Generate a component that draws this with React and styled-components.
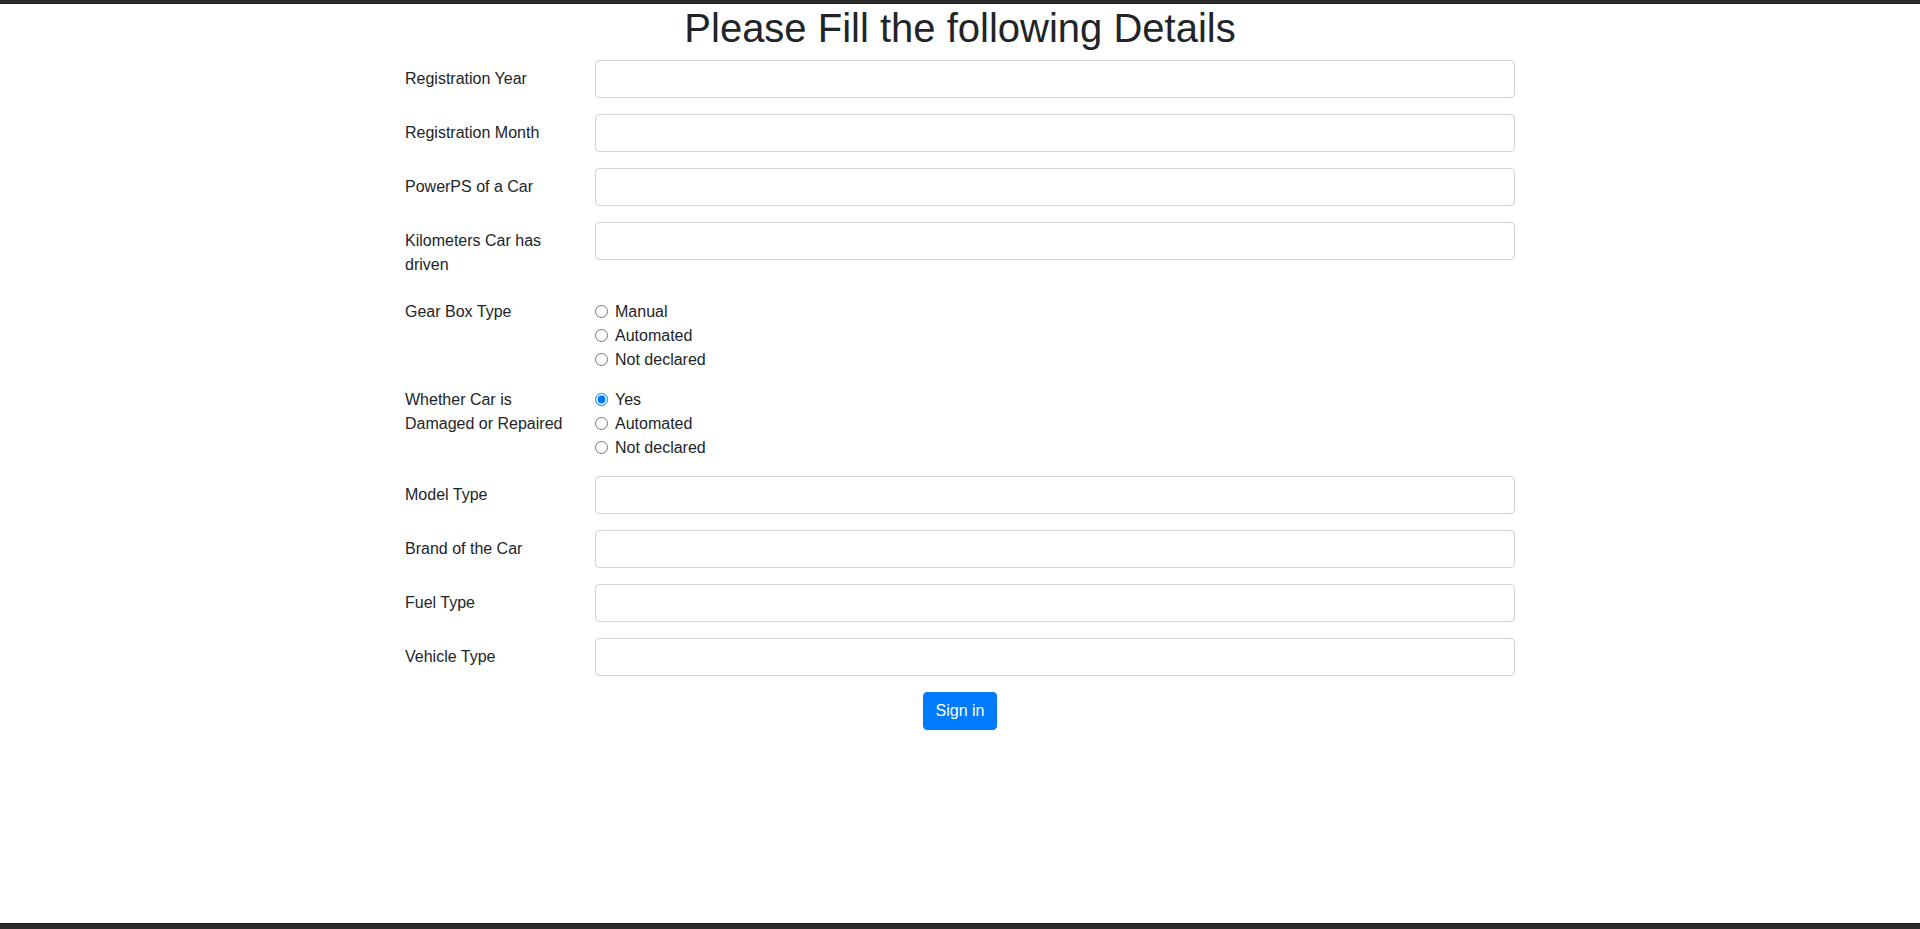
import React, { useState } from "react";
import styled, { createGlobalStyle } from "styled-components";

const GlobalStyle = createGlobalStyle`
	*, *::before, *::after {
		box-sizing: border-box;
	}
	body {
		margin: 0;
		font-family: "Liberation Sans", Arial, sans-serif;
		font-size: 16px;
		line-height: 1.5;
		color: #212529;
		background: #fff;
	}
`;

function App() {
	const textFields = [
		"Registration Year",
		"Registration Month",
		"PowerPS of a Car",
		"Kilometers Car has driven",
	];
	const moreFields = ["Model Type", "Brand of the Car", "Fuel Type", "Vehicle Type"];

	const [gear, setGear] = useState("");
	const [damaged, setDamaged] = useState("yes");

	return (
		<Page>
			<GlobalStyle />
			<Edge $height={4} />
			<Main>
				<Container>
					<Title>Please Fill the following Details</Title>
					<form onSubmit={(e) => e.preventDefault()}>
						{textFields.map((name) => (
							<FormRow key={name}>
								<Label>{name}</Label>
								<Field>
									<Input type="text" />
								</Field>
							</FormRow>
						))}

						<FormRow as="fieldset">
							<Label as="legend" $flat>
								Gear Box Type
							</Label>
							<Field>
								{[
									["manual", "Manual"],
									["automated", "Automated"],
									["none", "Not declared"],
								].map(([value, text]) => (
									<Check key={value}>
										<input
											type="radio"
											name="gear"
											checked={gear === value}
											onChange={() => setGear(value)}
										/>
										<span>{text}</span>
									</Check>
								))}
							</Field>
						</FormRow>

						<FormRow as="fieldset">
							<Label as="legend" $flat>
								Whether Car is Damaged or Repaired
							</Label>
							<Field>
								{[
									["yes", "Yes"],
									["automated", "Automated"],
									["none", "Not declared"],
								].map(([value, text]) => (
									<Check key={value}>
										<input
											type="radio"
											name="damaged"
											checked={damaged === value}
											onChange={() => setDamaged(value)}
										/>
										<span>{text}</span>
									</Check>
								))}
							</Field>
						</FormRow>

						{moreFields.map((name) => (
							<FormRow key={name}>
								<Label>{name}</Label>
								<Field>
									<Input type="text" />
								</Field>
							</FormRow>
						))}

						<Actions>
							<Button type="submit">Sign in</Button>
						</Actions>
					</form>
				</Container>
			</Main>
			<Edge $height={6} $bottom />
		</Page>
	);
}

const Page = styled.div`
	display: flex;
	flex-direction: column;
	min-height: 100vh;
`;

const Edge = styled.div`
	height: ${(p) => p.$height}px;
	flex-shrink: 0;
	background: #2c2c2c;
	${(p) =>
		p.$bottom
			? "border-top: 1px solid #1b1b1b;"
			: "border-bottom: 1px solid #1b1b1b;"}
`;

const Main = styled.main`
	flex: 1;
`;

const Container = styled.div`
	max-width: 1140px;
	margin: 0 auto;
	padding: 0 15px;
`;

const Title = styled.h1`
	margin: 0 0 8px;
	font-size: 40px;
	font-weight: 500;
	line-height: 1.2;
	text-align: center;
	color: #212529;
`;

const FormRow = styled.div`
	display: flex;
	margin: 0 -15px 16px;
	padding: 0;
	border: 0;
	min-width: 0;
`;

const Label = styled.label`
	flex: 0 0 16.6667%;
	max-width: 16.6667%;
	padding: ${(p) => (p.$flat ? "0 15px" : "7px 15px")};
	margin: 0;
	float: left;
	font-size: 16px;
	line-height: 1.5;
	color: #212529;
`;

const Field = styled.div`
	flex: 0 0 83.3333%;
	max-width: 83.3333%;
	padding: 0 15px;
`;

const Input = styled.input`
	display: block;
	width: 100%;
	height: 38px;
	padding: 6px 12px;
	font-family: inherit;
	font-size: 16px;
	line-height: 1.5;
	color: #495057;
	background: #fff;
	border: 1px solid #ced4da;
	border-radius: 4px;

	&:focus {
		outline: none;
		border-color: #80bdff;
		box-shadow: 0 0 0 3px rgba(0, 123, 255, 0.25);
	}
`;

const Check = styled.label`
	display: flex;
	align-items: flex-start;
	line-height: 24px;

	input {
		width: 13px;
		height: 13px;
		margin: 5px 7px 0 0;
		flex-shrink: 0;
	}
`;

const Actions = styled.div`
	display: flex;
	justify-content: center;
`;

const Button = styled.button`
	padding: 6px 12px;
	font-family: inherit;
	font-size: 16px;
	line-height: 1.5;
	color: #fff;
	background: #007bff;
	border: 1px solid #007bff;
	border-radius: 4px;
	cursor: pointer;

	&:hover {
		background: #0069d9;
	}
`;

export default App;
